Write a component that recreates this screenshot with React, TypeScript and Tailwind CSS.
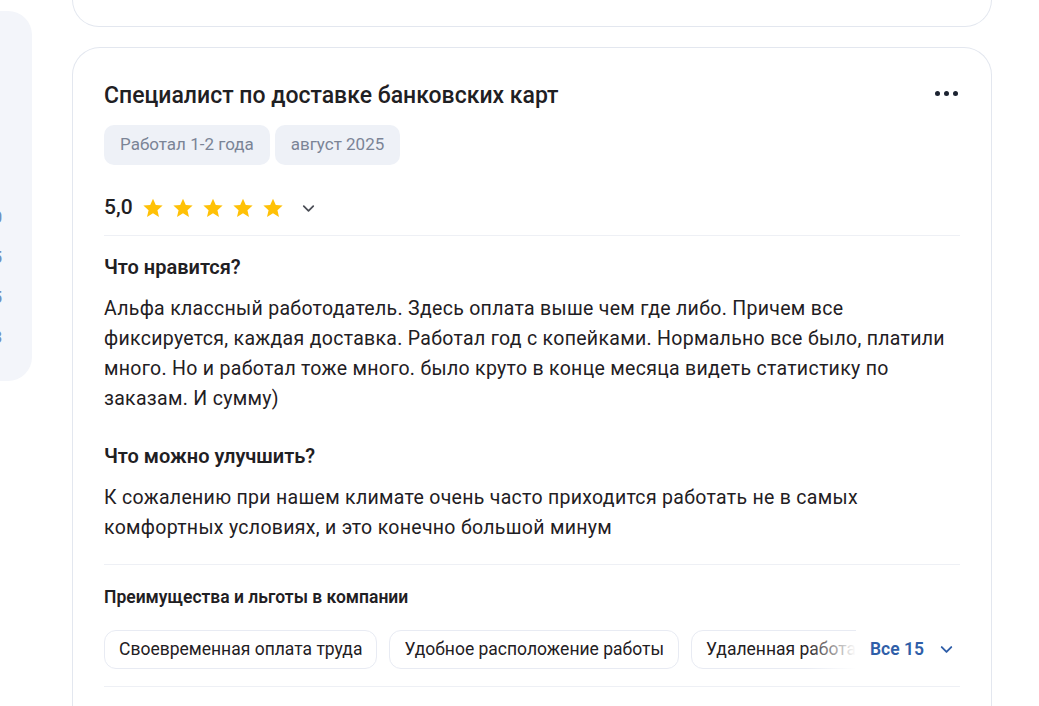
import { ChevronDown } from 'lucide-react';

const FONT = { fontFamily: 'Roboto, "Noto Sans", sans-serif' };

function Star() {
  return (
    <svg width="22" height="22" viewBox="0 0 24 24" className="shrink-0">
      <path
        d="M12 1.8l3.05 6.9 7.45.7-5.65 4.95 1.68 7.35L12 17.85 5.47 21.7l1.68-7.35L1.5 9.4l7.45-.7z"
        fill="#ffc107"
      />
    </svg>
  );
}

const benefits = ['Своевременная оплата труда', 'Удобное расположение работы', 'Удаленная работа', 'Гибкий график'];

export default function App() {
  return (
    <div className="flex min-h-[706px] w-[1039px] overflow-hidden bg-white text-[#1f2023]" style={FONT}>
      <div className="mt-[11px] h-[370px] w-[32px] shrink-0 overflow-hidden rounded-r-[24px] bg-[#f3f5fa]">
        <div className="-ml-[7px] flex flex-col pt-[187px] text-[16px] font-medium text-[#6f90c0]">
          <div className="flex h-10 items-center">0</div>
          <div className="flex h-10 items-center">5</div>
          <div className="flex h-10 items-center">5</div>
          <div className="flex h-10 items-center">3</div>
        </div>
      </div>

      <div className="ml-[40px] flex w-[920px] shrink-0 flex-col">
        <div className="h-[27px] rounded-b-[28px] border-x border-b border-[#e3e7ef]" />

        <div className="mt-[20px] rounded-t-[28px] border-x border-t border-[#e3e7ef] pt-[34px] pr-[31px] pb-10 pl-[31px]">
          <div className="flex items-center justify-between">
            <h2 className="text-[23px] leading-7 font-medium">Специалист по доставке банковских карт</h2>
            <div className="-mt-[6px] mr-[2px] flex gap-[4px]">
              <span className="h-[5px] w-[5px] rounded-full bg-[#1c2331]" />
              <span className="h-[5px] w-[5px] rounded-full bg-[#1c2331]" />
              <span className="h-[5px] w-[5px] rounded-full bg-[#1c2331]" />
            </div>
          </div>

          <div className="mt-[15px] flex gap-[5px]">
            <span className="flex h-10 items-center rounded-[10px] bg-[#eef1f7] px-4 text-[17px] text-[#7b8496]">Работал 1-2 года</span>
            <span className="flex h-10 items-center rounded-[10px] bg-[#eef1f7] px-4 text-[17px] text-[#7b8496]">август 2025</span>
          </div>

          <div className="mt-[29px] flex h-7 items-center">
            <span className="text-[21px] font-medium">5,0</span>
            <div className="ml-[9px] flex gap-[8px]">
              <Star />
              <Star />
              <Star />
              <Star />
              <Star />
            </div>
            <ChevronDown size={19} strokeWidth={2.2} className="ml-[15px] text-[#4a4d55]" />
          </div>

          <div className="mt-[13px] h-px bg-[#eef0f5]" />

          <h3 className="mt-[19px] text-[20px] leading-6 font-semibold">Что нравится?</h3>
          <p className="mt-[15px] text-[19.5px] leading-[30px] tracking-[0.3px]">
            Альфа классный работодатель. Здесь оплата выше чем где либо. Причем все
            <br />
            фиксируется, каждая доставка. Работал год с копейками. Нормально все было, платили
            <br />
            много. Но и работал тоже много. было круто в конце месяца видеть статистику по
            <br />
            заказам. И сумму)
          </p>

          <h3 className="mt-[30px] text-[20px] leading-6 font-semibold">Что можно улучшить?</h3>
          <p className="mt-[15px] text-[19.5px] leading-[30px] tracking-[0.3px]">
            К сожалению при нашем климате очень часто приходится работать не в самых
            <br />
            комфортных условиях, и это конечно большой минум
          </p>

          <div className="mt-[21px] h-px bg-[#eef0f5]" />

          <h4 className="mt-[22px] text-[17.5px] leading-5 font-semibold">Преимущества и льготы в компании</h4>

          <div className="mt-[23px] flex items-center">
            <div className="flex min-w-0 flex-1 gap-3 overflow-hidden">
              {benefits.map((b) => (
                <span
                  key={b}
                  className="flex h-[39px] shrink-0 items-center rounded-[12px] border border-[#e8ebf3] px-[14px] text-[17.5px] whitespace-nowrap"
                >
                  {b}
                </span>
              ))}
            </div>
            <div className="relative flex shrink-0 items-center pl-[14px]">
              <div className="absolute top-0 right-full h-[39px] w-[50px] bg-gradient-to-r from-white/0 to-white" />
              <span className="text-[17.5px] font-semibold text-[#2f5ea8]">Все 15</span>
              <ChevronDown size={19} strokeWidth={2.4} className="mr-[4px] ml-[13px] text-[#2f5ea8]" />
            </div>
          </div>

          <div className="mt-[17px] h-px bg-[#eef0f5]" />
        </div>
      </div>
    </div>
  );
}
